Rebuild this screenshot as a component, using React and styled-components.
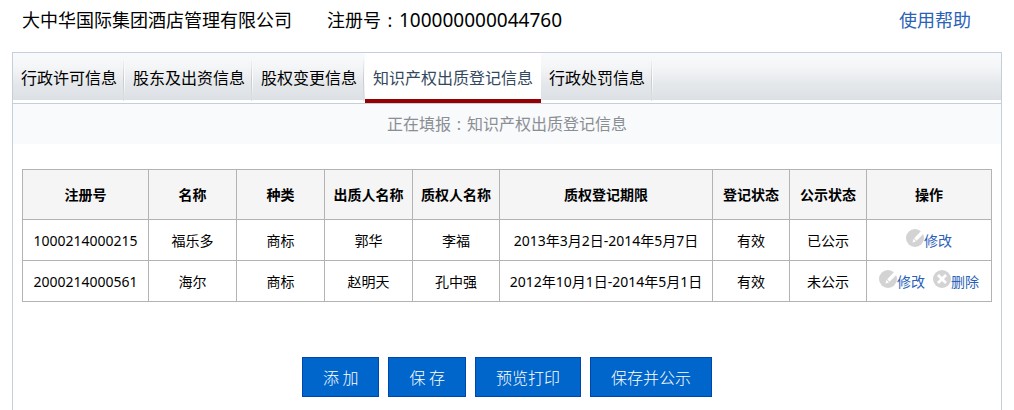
import React, { useState } from 'react';
import styled, { createGlobalStyle } from 'styled-components';

const tabs = [
  '行政许可信息',
  '股东及出资信息',
  '股权变更信息',
  '知识产权出质登记信息',
  '行政处罚信息',
];

const columns = [
  { title: '注册号', width: 126 },
  { title: '名称', width: 88 },
  { title: '种类', width: 88 },
  { title: '出质人名称', width: 88 },
  { title: '质权人名称', width: 87 },
  { title: '质权登记期限', width: 213 },
  { title: '登记状态', width: 77 },
  { title: '公示状态', width: 77 },
  { title: '操作', width: 125 },
];

const records = [
  {
    cells: ['1000214000215', '福乐多', '商标', '郭华', '李福', '2013年3月2日-2014年5月7日', '有效', '已公示'],
    removable: false,
  },
  {
    cells: ['2000214000561', '海尔', '商标', '赵明天', '孔中强', '2012年10月1日-2014年5月1日', '有效', '未公示'],
    removable: true,
  },
];

const buttons = ['添 加', '保 存', '预览打印', '保存并公示'];

function EditIcon() {
  return (
    <svg width="18" height="18" viewBox="0 0 18 18" aria-hidden="true">
      <circle cx="9" cy="9" r="9" fill="#d3d3d3" />
      <path d="M15.6 1.6 L18 4.2 L10.6 11.8 L8.2 9.2 Z" fill="#fff" />
      <path d="M7.6 9.8 L10 12.4 L6.4 13.6 Z" fill="#fff" />
    </svg>
  );
}

function DeleteIcon() {
  return (
    <svg width="18" height="18" viewBox="0 0 18 18" aria-hidden="true">
      <circle cx="9" cy="9" r="9" fill="#d3d3d3" />
      <path d="M5 5 L13 13 M13 5 L5 13" stroke="#fff" strokeWidth="2.8" />
    </svg>
  );
}

function App() {
  const [active, setActive] = useState(3);

  return (
    <Page>
      <GlobalStyle />
      <Header>
        <Company>大中华国际集团酒店管理有限公司</Company>
        <span>
          注册号<Colon>:</Colon>
          <RegNumber>100000000044760</RegNumber>
        </span>
        <HelpLink href="#">使用帮助</HelpLink>
      </Header>
      <Panel>
        <TabBar>
          {tabs.map((tab, i) => (
            <Tab key={tab} type="button" $active={i === active} onClick={() => setActive(i)}>
              {tab}
            </Tab>
          ))}
        </TabBar>
        <Notice>
          正在填报<Colon>:</Colon>
          {tabs[active]}
        </Notice>
        <Content>
          <Table>
            <colgroup>
              {columns.map((col) => (
                <Col key={col.title} $width={col.width} />
              ))}
            </colgroup>
            <thead>
              <tr>
                {columns.map((col) => (
                  <Th key={col.title}>{col.title}</Th>
                ))}
              </tr>
            </thead>
            <tbody>
              {records.map((record) => (
                <tr key={record.cells[0]}>
                  {record.cells.map((cell, i) => (
                    <Td key={i}>{cell}</Td>
                  ))}
                  <Td>
                    <Actions>
                      <ActionLink href="#"><EditIcon />修改</ActionLink>
                      {record.removable && (
                        <ActionLink href="#"><DeleteIcon />删除</ActionLink>
                      )}
                    </Actions>
                  </Td>
                </tr>
              ))}
            </tbody>
          </Table>
          <ButtonRow>
            {buttons.map((label) => (
              <Button key={label} type="button">{label}</Button>
            ))}
          </ButtonRow>
        </Content>
      </Panel>
    </Page>
  );
}

const GlobalStyle = createGlobalStyle`
  * {
    box-sizing: border-box;
  }

  body {
    margin: 0;
    background: #fff;
    color: #000;
    font-family: "Noto Sans", "Noto Sans CJK SC", sans-serif;
    font-size: 14px;
  }
`;

const Page = styled.div`
  display: flex;
  flex-direction: column;
  min-height: 100vh;
  padding: 0 12px;
`;

const Header = styled.header`
  display: flex;
  align-items: center;
  height: 52px;
  padding: 0 31px 12px 10px;
  font-size: 18px;
  line-height: 40px;
  white-space: nowrap;
`;

const Company = styled.span`
  margin-right: 35px;
`;

const Colon = styled.span`
  display: inline-block;
  width: 1em;
  text-align: center;
`;

const RegNumber = styled.span`
  font-size: 19px;
`;

const HelpLink = styled.a`
  margin-left: auto;
  color: #2a62b8;
  text-decoration: none;
`;

const Panel = styled.main`
  flex: 1;
  border: 1px solid #c4cedc;
  border-bottom: none;
`;

const TabBar = styled.nav`
  display: flex;
  height: 51px;
  border-bottom: 1px solid #c4cedc;
  background: linear-gradient(#f9fafc, #f4f5f7 30%, #e5e8eb 65%, #dce0e4) no-repeat 0 0 / 100% 47px;
`;

const Tab = styled.button`
  height: 50px;
  padding: 4px 8px 0;
  border: none;
  border-bottom: 4px solid ${(props) => (props.$active ? '#960000' : 'transparent')};
  background: ${(props) => (props.$active
    ? '#fff'
    : `linear-gradient(transparent, #fff 50%, transparent) no-repeat 100% 5px / 1px 40px,
       linear-gradient(transparent, #c8ccd2 50%, #dce0e4) no-repeat calc(100% - 1px) 5px / 1px 43px`)};
  color: ${(props) => (props.$active ? '#34495e' : '#000')};
  font-family: inherit;
  font-size: 16px;
  line-height: 42px;
  white-space: nowrap;
  cursor: pointer;
`;

const Notice = styled.div`
  height: 40px;
  background: #f9fafc;
  color: #8a8f94;
  font-size: 16px;
  line-height: 40px;
  text-align: center;
`;

const Content = styled.div`
  padding: 25px 9px 12px;
`;

const Table = styled.table`
  width: 100%;
  table-layout: fixed;
  border-collapse: collapse;
  line-height: 20px;
  text-align: center;
  white-space: nowrap;
`;

const Col = styled.col`
  width: ${(props) => props.$width}px;
`;

const Th = styled.th`
  height: 50px;
  padding: 0;
  border: 1px solid #b3b3b3;
  background: #f5f5f5;
  font-weight: bold;
`;

const Td = styled.td`
  height: 41px;
  padding: 2px 0 0;
  border: 1px solid #b3b3b3;
`;

const Actions = styled.div`
  display: flex;
  justify-content: center;
  gap: 8px;
`;

const ActionLink = styled.a`
  display: flex;
  align-items: flex-start;
  color: #2a62b8;
  line-height: 24px;
  text-decoration: none;
`;

const ButtonRow = styled.div`
  display: flex;
  justify-content: center;
  gap: 9px;
  margin-top: 55px;
`;

const Button = styled.button`
  height: 40px;
  padding: 0 20px;
  border: 1px solid #0047ab;
  background: #0066cc;
  color: #fff;
  font-family: "Noto Sans CJK SC", sans-serif;
  font-size: 16px;
  font-weight: 300;
  cursor: pointer;
`;

export default App;
